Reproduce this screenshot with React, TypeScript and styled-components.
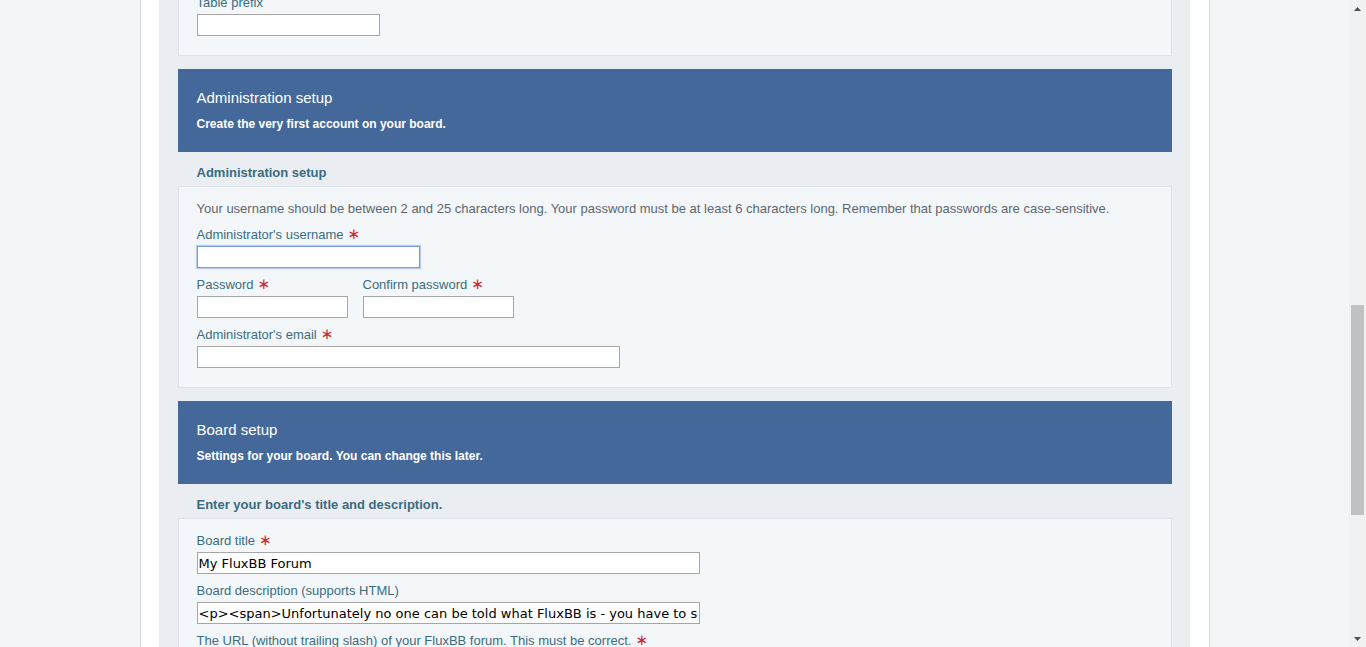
import React, { useLayoutEffect, useRef, useState } from "react";
import styled, { createGlobalStyle, css } from "styled-components";

const GlobalStyle = createGlobalStyle`
  html, body {
    margin: 0;
    padding: 0;
    background: #f3f6f9;
    overflow: hidden;
  }
  body {
    font-family: "Liberation Sans", Arial, sans-serif;
    font-size: 13px;
    color: #5c6670;
  }
`;

const Viewport = styled.div`
  display: flex;
  height: 100vh;
`;

const Main = styled.div`
  flex: 1;
  overflow-y: scroll;
  scrollbar-width: none;
  &::-webkit-scrollbar {
    display: none;
  }
`;

const ScrollBar = styled.div`
  width: 17px;
  flex: none;
  display: flex;
  flex-direction: column;
  background: #f1f1f1;
`;

const Arrow = styled.div`
  height: 17px;
  flex: none;
  display: flex;
  align-items: center;
  justify-content: center;
`;

const Track = styled.div`
  flex: 1;
  padding: 0 2px;
`;

const Thumb = styled.div`
  background: #c1c1c1;
`;

const Page = styled.div`
  padding: 67px 0 142px;
`;

const Shell = styled.div`
  width: 1031px;
  margin: 0 auto;
  padding: 0 19px 0 18px;
  background: #fff;
  border-left: 1px solid #d3dbe4;
  border-right: 1px solid #d3dbe4;
`;

const Panel = styled.div`
  background: #eaeef3;
  padding: 19px 18px 20px 19px;
`;

const SectionHeader = styled.div<{ $first?: boolean }>`
  background: #45689b;
  color: #fff;
  padding: 20px 19px 20px;
  margin-top: ${(p) => (p.$first ? 0 : 13)}px;
`;

const HeaderTitle = styled.h2`
  margin: 0 0 9px;
  font-size: 15px;
  font-weight: normal;
  line-height: 18px;
`;

const HeaderText = styled.p`
  margin: 0;
  font-size: 12px;
  font-weight: bold;
  line-height: 16px;
`;

const Legend = styled.div`
  padding: 12px 19px 4px;
  font-size: 13px;
  font-weight: bold;
  line-height: 18px;
  color: #3b6b7f;
`;

const Card = styled.div`
  background: #f4f7fa;
  border: 1px solid #dde3ea;
  padding: 12px 18px 19px;
  display: flex;
  flex-direction: column;
  gap: 7px;
`;

const Intro = styled.p`
  margin: 0;
  padding-top: 1px;
  line-height: 18px;
  color: #5c6670;
`;

const Row = styled.div`
  display: flex;
  gap: 15px;
`;

const Field = styled.label`
  display: flex;
  flex-direction: column;
  align-items: flex-start;
`;

const LabelText = styled.span`
  display: block;
  padding-top: 1px;
  line-height: 18px;
  margin-bottom: 2px;
  color: #3b6c80;
`;

const Req = styled.span`
  margin-left: 4px;
  color: #d3262c;
  font-family: "DejaVu Sans", sans-serif;
  font-size: 15px;
  line-height: 0;
  font-weight: normal;
`;

const boxStyles = css<{ $w: number; $focus?: boolean }>`
  box-sizing: border-box;
  width: ${(p) => p.$w}px;
  height: 22px;
  margin: 0;
  padding: 0 1px;
  background: #fff;
  border: 1px solid ${(p) => (p.$focus ? "#7b9cd8" : "#a6a6a6")};
  box-shadow: ${(p) => (p.$focus ? "0 0 1px 1px #b9ccf0" : "none")};
  border-radius: 0;
  outline: none;
  font-family: "DejaVu Sans", Verdana, sans-serif;
  font-size: 13px;
  color: #000;
`;

const TextInput = styled.input<{ $w: number; $focus?: boolean }>`
  ${boxStyles}
`;

const Select = styled.select<{ $w: number; $focus?: boolean }>`
  ${boxStyles}
`;

const Buttons = styled.div`
  padding: 18px 19px 0;
`;

const Button = styled.button`
  height: 26px;
  padding: 0 12px;
  font-family: "Liberation Sans", Arial, sans-serif;
  font-size: 13px;
  font-weight: bold;
  color: #fff;
  background: #45689b;
  border: 1px solid #3a5a88;
`;

type FieldProps = {
  label: string;
  required?: boolean;
  width: number;
  value?: string;
  focus?: boolean;
  type?: string;
  inputRef?: React.Ref<HTMLInputElement>;
};

const TextField: React.FC<FieldProps> = ({ label, required, width, value, focus, type, inputRef }) => (
  <Field>
    <LabelText>
      {label}
      {required && <Req>∗</Req>}
    </LabelText>
    <TextInput
      ref={inputRef}
      type={type || "text"}
      $w={width}
      $focus={focus}
      defaultValue={value}
    />
  </Field>
);

const SelectField: React.FC<{ label: string; required?: boolean; width: number; options: string[] }> = ({
  label,
  required,
  width,
  options,
}) => (
  <Field>
    <LabelText>
      {label}
      {required && <Req>∗</Req>}
    </LabelText>
    <Select $w={width} defaultValue={options[0]}>
      {options.map((o) => (
        <option key={o}>{o}</option>
      ))}
    </Select>
  </Field>
);

const Triangle: React.FC<{ down?: boolean }> = ({ down }) => (
  <svg width="7" height="4" viewBox="0 0 7 4">
    <polygon points={down ? "0,0 7,0 3.5,4" : "0,4 7,4 3.5,0"} fill="#505050" />
  </svg>
);

const App: React.FC = () => {
  const main = useRef<HTMLDivElement>(null);
  const anchor = useRef<HTMLInputElement>(null);
  const track = useRef<HTMLDivElement>(null);
  const [thumb, setThumb] = useState({ top: 0, height: 0 });

  // the shot shows the form scrolled down to the end of the database part
  useLayoutEffect(() => {
    const box = main.current;
    if (!box || !anchor.current || !track.current) return;
    const top = anchor.current.getBoundingClientRect().top - box.getBoundingClientRect().top;
    box.scrollTop = top - 14;
    const h = track.current.clientHeight;
    setThumb({
      top: (h * box.scrollTop) / box.scrollHeight,
      height: (h * box.clientHeight) / box.scrollHeight,
    });
  }, []);

  return (
    <>
      <GlobalStyle />
      <Viewport>
        <Main ref={main}>
          <Page>
            <Shell>
              <Panel>
                <SectionHeader $first>
                  <HeaderTitle>FluxBB Installation</HeaderTitle>
                  <HeaderText>Welcome to FluxBB installation. You are about to install FluxBB. Please fill in the form below.</HeaderText>
                </SectionHeader>

                <SectionHeader>
                  <HeaderTitle>Database setup</HeaderTitle>
                  <HeaderText>Please enter the requested information in order to setup your database.</HeaderText>
                </SectionHeader>
                <Legend>Select your database type</Legend>
                <Card>
                  <Intro>FluxBB currently supports MySQL, PostgreSQL and SQLite. If your database of choice is missing, this PHP environment does not support it.</Intro>
                  <SelectField label="Database type" required width={183} options={["MySQL Improved", "MySQL", "PostgreSQL", "SQLite"]} />
                </Card>
                <Legend>Enter your database server hostname</Legend>
                <Card>
                  <Intro>The address of the database server (example: localhost, db.myhost.com or 192.168.0.15).</Intro>
                  <TextField label="Database server hostname" required width={223} value="localhost" />
                </Card>
                <Legend>Enter the name of your database</Legend>
                <Card>
                  <Intro>The name of the database that FluxBB will be installed into. The database must exist.</Intro>
                  <TextField label="Database name" required width={223} />
                </Card>
                <Legend>Enter your database username and password</Legend>
                <Card>
                  <Intro>Enter the username and password with which you connect to the database.</Intro>
                  <Row>
                    <TextField label="Database username" width={151} />
                    <TextField label="Database password" type="password" width={151} />
                  </Row>
                </Card>
                <Legend>Enter database table prefix</Legend>
                <Card>
                  <Intro>If you like, you can specify a table prefix. This way you can run multiple copies of FluxBB in the same database (example: foo_).</Intro>
                  <TextField label="Table prefix" width={183} inputRef={anchor} />
                </Card>

                <SectionHeader>
                  <HeaderTitle>Administration setup</HeaderTitle>
                  <HeaderText>Create the very first account on your board.</HeaderText>
                </SectionHeader>
                <Legend>Administration setup</Legend>
                <Card>
                  <Intro>Your username should be between 2 and 25 characters long. Your password must be at least 6 characters long. Remember that passwords are case-sensitive.</Intro>
                  <TextField label="Administrator's username" required width={223} focus />
                  <Row>
                    <TextField label="Password" required type="password" width={151} />
                    <TextField label="Confirm password" required type="password" width={151} />
                  </Row>
                  <TextField label="Administrator's email" required width={423} />
                </Card>

                <SectionHeader>
                  <HeaderTitle>Board setup</HeaderTitle>
                  <HeaderText>Settings for your board. You can change this later.</HeaderText>
                </SectionHeader>
                <Legend>Enter your board's title and description.</Legend>
                <Card>
                  <TextField label="Board title" required width={503} value="My FluxBB Forum" />
                  <TextField
                    label="Board description (supports HTML)"
                    width={503}
                    value="<p><span>Unfortunately no one can be told what FluxBB is - you have to see it for yourself.</span></p>"
                  />
                  <TextField
                    label="The URL (without trailing slash) of your FluxBB forum. This must be correct."
                    required
                    width={503}
                    value="http://localhost/fluxbb"
                  />
                  <SelectField label="Default language" required width={183} options={["English"]} />
                  <SelectField label="Default style" required width={183} options={["Air"]} />
                </Card>
                <Buttons>
                  <Button type="button">Start install</Button>
                </Buttons>
              </Panel>
            </Shell>
          </Page>
        </Main>
        <ScrollBar>
          <Arrow>
            <Triangle />
          </Arrow>
          <Track ref={track}>
            <Thumb style={{ marginTop: thumb.top, height: thumb.height }} />
          </Track>
          <Arrow>
            <Triangle down />
          </Arrow>
        </ScrollBar>
      </Viewport>
    </>
  );
};

export default App;
